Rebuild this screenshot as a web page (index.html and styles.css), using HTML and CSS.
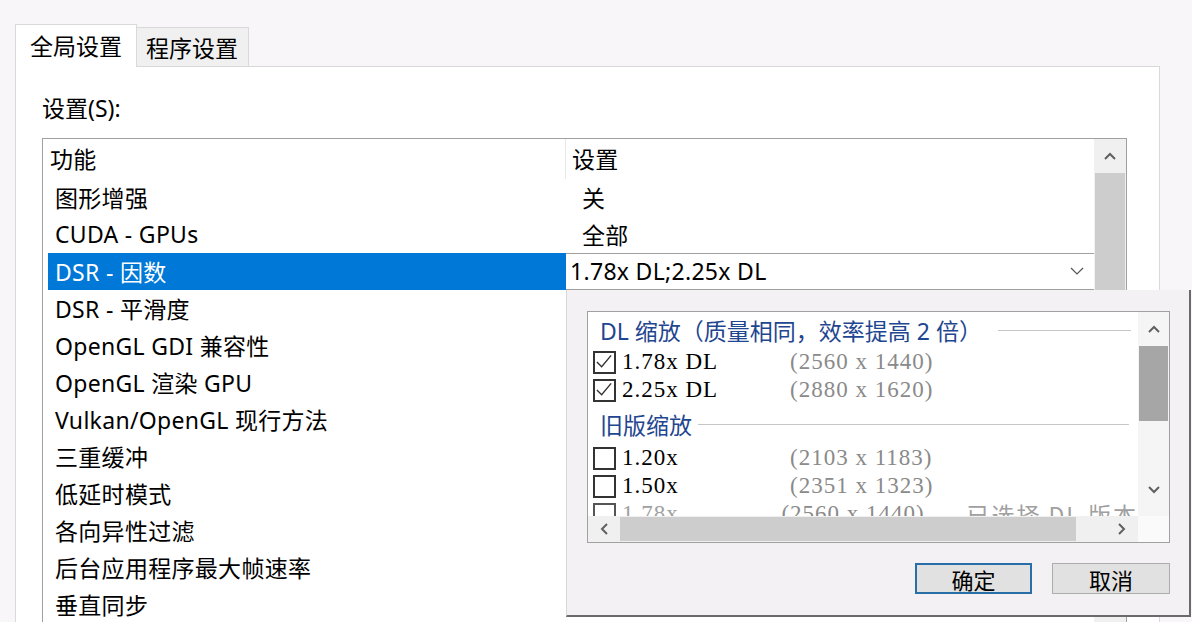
FILE: index.html
```html
<!DOCTYPE html>
<html lang="zh-CN">

<head>
  <meta charset="UTF-8" />
  <title>管理 3D 设置</title>
  <link rel="stylesheet" href="styles.css">
</head>

<body>
  <div class="tabs">
    <div class="tab active">全局设置</div>
    <div class="tab">程序设置</div>
  </div>

  <div class="panel">
    <div class="caption">设置(S):</div>

    <div class="grid">
      <div class="grid-body">
        <div class="row head">
          <div class="c1">功能</div>
          <div class="c2">设置</div>
        </div>
        <div class="row"><div class="c1">图形增强</div><div class="c2">关</div></div>
        <div class="row"><div class="c1">CUDA - GPUs</div><div class="c2">全部</div></div>
        <div class="row sel">
          <div class="c1">DSR - 因数</div>
          <div class="combo">
            <span>1.78x DL;2.25x DL</span>
            <svg width="14" height="8" viewBox="0 0 14 8"><polyline points="1,1 7,7 13,1" fill="none" stroke="#555" stroke-width="1.2"/></svg>
          </div>
        </div>
        <div class="row"><div class="c1">DSR - 平滑度</div><div class="c2"></div></div>
        <div class="row"><div class="c1">OpenGL GDI 兼容性</div><div class="c2"></div></div>
        <div class="row"><div class="c1">OpenGL 渲染 GPU</div><div class="c2"></div></div>
        <div class="row"><div class="c1">Vulkan/OpenGL 现行方法</div><div class="c2"></div></div>
        <div class="row"><div class="c1">三重缓冲</div><div class="c2"></div></div>
        <div class="row"><div class="c1">低延时模式</div><div class="c2"></div></div>
        <div class="row"><div class="c1">各向异性过滤</div><div class="c2"></div></div>
        <div class="row"><div class="c1">后台应用程序最大帧速率</div><div class="c2"></div></div>
        <div class="row"><div class="c1">垂直同步</div><div class="c2"></div></div>
      </div>
      <div class="vscroll">
        <div class="arrow-btn up">
          <svg width="12" height="8" viewBox="0 0 12 8"><polyline points="1,7 6,2 11,7" fill="none" stroke="#606060" stroke-width="2"/></svg>
        </div>
        <div class="thumb"></div>
      </div>
    </div>
  </div>

  <!-- drop-down opened from the DSR combo -->
  <div class="dropdown">
    <div class="pick">
      <div class="pick-list">
        <div class="group"><span>DL 缩放（质量相同，效率提高 2 倍）</span><i></i></div>
        <div class="item">
          <span class="box"><svg width="20" height="20" viewBox="0 0 20 20"><polyline points="2,10 7,15 17,3" fill="none" stroke="#333" stroke-width="1.5"/></svg></span>
          <span class="lbl">1.78x DL</span><span class="res">(2560 x 1440)</span>
        </div>
        <div class="item">
          <span class="box"><svg width="20" height="20" viewBox="0 0 20 20"><polyline points="2,10 7,15 17,3" fill="none" stroke="#333" stroke-width="1.5"/></svg></span>
          <span class="lbl">2.25x DL</span><span class="res">(2880 x 1620)</span>
        </div>
        <div class="group old"><span>旧版缩放</span><i></i></div>
        <div class="item">
          <span class="box"></span><span class="lbl">1.20x</span><span class="res">(2103 x 1183)</span>
        </div>
        <div class="item">
          <span class="box"></span><span class="lbl">1.50x</span><span class="res">(2351 x 1323)</span>
        </div>
        <div class="item off">
          <span class="box"></span><span class="lbl">1.78x</span><span class="res">(2560 x 1440)</span><span class="note">已选择 DL 版本</span>
        </div>
      </div>
      <div class="pick-vbar">
        <div class="arrow-btn">
          <svg width="12" height="8" viewBox="0 0 12 8"><polyline points="1,7 6,2 11,7" fill="none" stroke="#606060" stroke-width="2"/></svg>
        </div>
        <div class="vthumb"></div>
        <div class="vtrack"></div>
        <div class="arrow-btn down">
          <svg width="12" height="8" viewBox="0 0 12 8"><polyline points="1,1 6,6 11,1" fill="none" stroke="#606060" stroke-width="2"/></svg>
        </div>
      </div>
      <div class="pick-hbar">
        <div class="arrow-btn side">
          <svg width="8" height="12" viewBox="0 0 8 12"><polyline points="7,1 2,6 7,11" fill="none" stroke="#606060" stroke-width="2"/></svg>
        </div>
        <div class="hthumb"></div>
        <div class="htrack"></div>
        <div class="arrow-btn side">
          <svg width="8" height="12" viewBox="0 0 8 12"><polyline points="1,1 6,6 1,11" fill="none" stroke="#606060" stroke-width="2"/></svg>
        </div>
      </div>
      <div class="corner"></div>
    </div>

    <div class="buttons">
      <button class="btn default">确定</button>
      <button class="btn">取消</button>
    </div>
  </div>
</body>

</html>
```

FILE: styles.css
```css
* {
  box-sizing: border-box;
}

body {
  margin: 0;
  width: 1192px;
  height: 622px;
  overflow: hidden;
  position: relative;
  background: #f8f6f8;
  font-family: "Noto Sans", "Noto Sans CJK SC", sans-serif;
  font-size: 23px;
  color: #000;
}

/* tab strip */
.tabs {
  display: flex;
  align-items: flex-end;
  height: 67px;
  padding: 24px 0 0 15px;
}

.tab {
  display: flex;
  align-items: center;
  border: 1px solid #d9d9d9;
  border-bottom: none;
  line-height: 1;
}

.tab.active {
  width: 122px;
  height: 43px;
  padding-left: 14px;
  background: #fff;
  position: relative;
  z-index: 1;
}

.tab:not(.active) {
  width: 112px;
  height: 39px;
  margin-bottom: 1px;
  padding: 3px 0 0 9px;
  border-left: none;
  background: #f0f0f0;
}

/* white page under the tabs */
.panel {
  width: 1145px;
  height: 556px;
  margin: -1px 0 0 15px;
  padding-left: 26px;
  background: #fff;
  border: 1px solid #d9d9d9;
  border-bottom: none;
}

.caption {
  margin-top: 26px;
  line-height: 30px;
}

.grid {
  display: flex;
  width: 1085px;
  height: 500px;
  margin-top: 15px;
  border: 1px solid #a0a0a0;
  border-bottom: none;
}

.grid-body {
  flex: 1;
}

.row {
  display: flex;
  height: 37px;
  align-items: stretch;
  letter-spacing: 0.3px;
}

.row .c1,
.row .c2 {
  display: flex;
  align-items: center;
  padding-bottom: 2px;
}

.c1 {
  width: 523px;
  padding-left: 12px;
}

.c2 {
  flex: 1;
  padding-left: 16px;
}

.row.head {
  height: 40px;
}

.row.head .c1 {
  padding-left: 7px;
  border-right: 1px solid #e8e8e8;
}

.row.head .c2 {
  padding-left: 6px;
}

.row.sel .c1 {
  width: 518px;
  margin-left: 5px;
  padding-left: 7px;
  background: #0078d7;
  color: #fff;
}

.combo {
  flex: 1;
  display: flex;
  align-items: center;
  justify-content: space-between;
  padding: 0 10px 2px 4px;
  background: #fff;
  border-top: 1px solid #a0a0a0;
  border-bottom: 1px solid #a0a0a0;
}

.vscroll {
  width: 32px;
  display: flex;
  flex-direction: column;
  background: #f0f0f0;
}

.arrow-btn {
  display: flex;
  align-items: center;
  justify-content: center;
  height: 34px;
}

.vscroll .thumb {
  height: 220px;
  margin: 0 1px;
  background: #cdcdcd;
}

/* popup list of DSR factors */
.dropdown {
  position: absolute;
  left: 566px;
  top: 290px;
  width: 625px;
  height: 327px;
  padding: 21px 19px 0 20px;
  background: #f3f1f3;
  border-left: 1px solid #d8d6d8;
  border-right: 2px solid #6a6a6a;
  border-bottom: 2px solid #6a6a6a;
}

.pick {
  display: grid;
  grid-template-columns: 1fr 31px;
  grid-template-rows: 204px 26px;
  width: 583px;
  height: 232px;
  background: #fff;
  border: 1px solid #a0a0a0;
}

.pick-list {
  overflow: hidden;
}

.group {
  display: flex;
  align-items: center;
  height: 36px;
  padding: 0 7px 0 12px;
  color: #1f4690;
}

.group.old {
  height: 40px;
}

.group i {
  flex: 1;
  margin-left: 16px;
  border-top: 1px solid #c6c6c6;
}

.group.old i {
  margin-left: 6px;
  margin-right: 2px;
}

.item {
  display: flex;
  align-items: center;
  height: 28px;
  padding-left: 5px;
  font-family: "Liberation Serif", "Noto Sans CJK SC", serif;
  font-size: 23px;
  letter-spacing: 1px;
}

.box {
  width: 23px;
  height: 23px;
  flex: none;
  border: 2px solid #333;
  display: flex;
  align-items: center;
  justify-content: center;
}

.lbl {
  width: 168px;
  margin-left: 6px;
}

.res {
  width: 195px;
  color: #8a8a8a;
}

.note {
  font-family: "Noto Sans CJK SC", sans-serif;
  color: #a0a0a0;
  letter-spacing: 2px;
  white-space: nowrap;
}

.item.off {
  color: #a0a0a0;
}

.item.off .box {
  border-color: #555;
}

.pick-vbar {
  display: flex;
  flex-direction: column;
  background: #f5f5f5;
}

.vthumb {
  height: 75px;
  margin: 0 1px;
  background: #a6a6a6;
}

.vtrack {
  flex: 1;
}

.arrow-btn.down {
  height: 38px;
  align-items: flex-start;
  padding-top: 8px;
}

.pick-hbar {
  display: flex;
  background: #f0f0f0;
}

.arrow-btn.side {
  width: 32px;
  height: 26px;
}

.hthumb {
  width: 456px;
  margin: 1px 0;
  background: #cdcdcd;
}

.htrack {
  flex: 1;
}

.corner {
  background: #fafafa;
}

.buttons {
  display: flex;
  justify-content: flex-end;
  gap: 20px;
  margin-top: 20px;
}

.btn {
  width: 118px;
  height: 31px;
  padding: 0;
  font-family: "Noto Sans CJK SC", sans-serif;
  font-size: 22px;
  line-height: 1;
  color: #000;
  background: #e1e1e1;
  border: 1px solid #adadad;
}

.btn.default {
  width: 117px;
  border: 2px solid #2a6ea8;
}
```
